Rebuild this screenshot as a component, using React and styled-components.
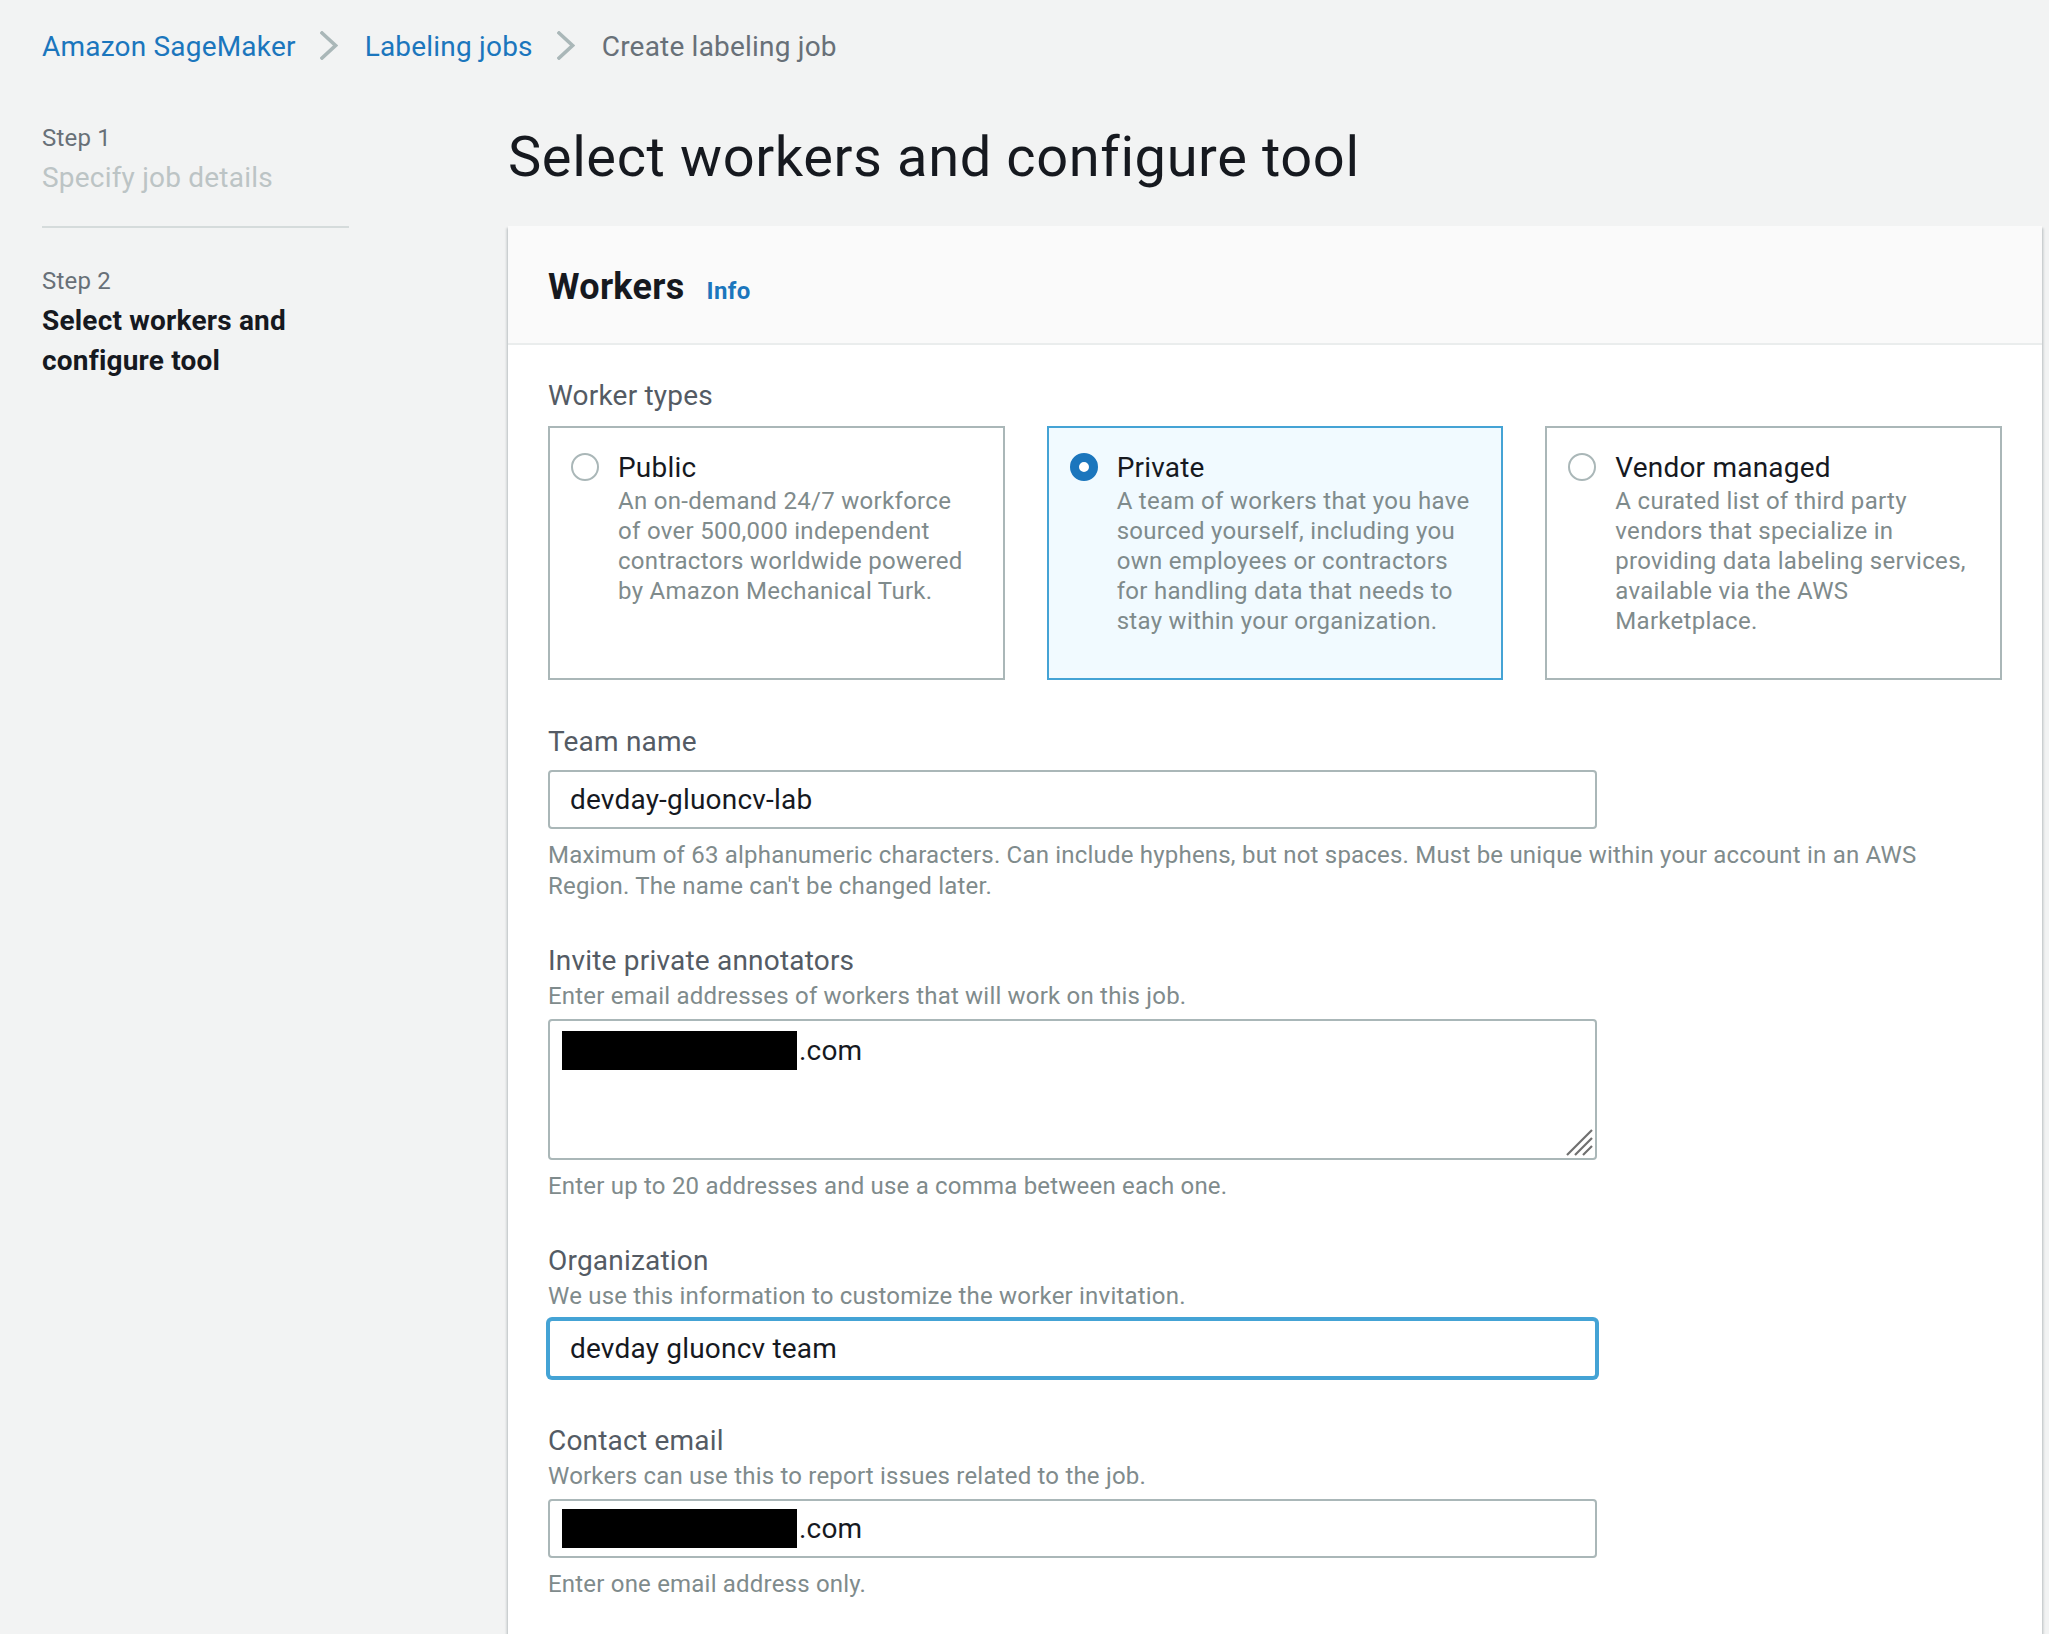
import React from 'react';
import styled, { createGlobalStyle } from 'styled-components';

const GlobalStyle = createGlobalStyle`
  html, body { margin: 0; padding: 0; background: #f2f3f3; }
  body {
    font-family: Roboto, "Noto Sans", "Liberation Sans", sans-serif;
    color: #16191f;
    -webkit-font-smoothing: antialiased;
  }
  * { box-sizing: border-box; }
`;

const Page = styled.div`
  padding: 27px 7px 0 42px;
`;

const Breadcrumbs = styled.nav`
  display: flex;
  align-items: center;
  font-size: 28px;
  line-height: 40px;
  letter-spacing: 0.2px;
`;

const Crumb = styled.a`
  color: ${(p) => (p.$current ? '#687078' : '#1b76bd')};
  text-decoration: none;
`;

const ChevronIcon = styled.svg`
  width: 18px;
  height: 29px;
  margin: -3px 27px 0 24px;
  flex: none;
`;

const Chevron = () => (
  <ChevronIcon viewBox="0 0 18 29" fill="none">
    <path d="M2 2 L15.5 14.5 L2 27" stroke="#aab7b8" strokeWidth="3.6" strokeLinecap="square" />
  </ChevronIcon>
);

const Layout = styled.div`
  display: grid;
  grid-template-columns: 307px 1fr;
  column-gap: 159px;
  margin-top: 55px;
`;

const Sidebar = styled.aside`
  display: flex;
  flex-direction: column;
`;

const StepBlock = styled.div`
  display: flex;
  flex-direction: column;
  gap: 4px;
`;

const StepNumber = styled.div`
  font-size: 24px;
  line-height: 32px;
  color: #687078;
  letter-spacing: 0.2px;
`;

const StepTitle = styled.div`
  font-size: 28px;
  line-height: 40px;
  letter-spacing: 0.2px;
  color: ${(p) => (p.$active ? '#16191f' : '#bcc4c5')};
  font-weight: ${(p) => (p.$active ? 700 : 400)};
`;

const StepDivider = styled.hr`
  border: 0;
  border-top: 2px solid #d5dbdb;
  margin: 28px 0 37px;
  width: 100%;
`;

const Main = styled.main`
  display: flex;
  flex-direction: column;
`;

const PageTitle = styled.h1`
  margin: 3px 0 37px;
  font-size: 56px;
  line-height: 64px;
  font-weight: 400;
  letter-spacing: 0.6px;
  color: #16191f;
`;

const Panel = styled.section`
  background: #fff;
  box-shadow: 0 2px 2px 0 rgba(0, 28, 36, 0.22), 2px 2px 2px 0 rgba(0, 28, 36, 0.1),
    -2px 2px 2px 0 rgba(0, 28, 36, 0.1);
`;

const PanelHeader = styled.header`
  background: #fafafa;
  border-bottom: 2px solid #eaeded;
  padding: 39px 40px 34px;
  display: flex;
  align-items: baseline;
  gap: 22px;
`;

const PanelTitle = styled.h2`
  margin: 0;
  font-size: 36px;
  line-height: 44px;
  font-weight: 700;
  letter-spacing: 0.3px;
  color: #16191f;
`;

const InfoLink = styled.a`
  font-size: 24px;
  font-weight: 700;
  color: #1b76bd;
  text-decoration: none;
  letter-spacing: 0.4px;
`;

const PanelBody = styled.div`
  padding: 31px 40px 60px;
  display: flex;
  flex-direction: column;
  gap: 39px;
`;

const Field = styled.div`
  display: flex;
  flex-direction: column;
`;

const Label = styled.div`
  font-size: 28px;
  line-height: 40px;
  color: #545b64;
  letter-spacing: 0.2px;
  margin-bottom: ${(p) => p.$gap || 0}px;
`;

const Description = styled.div`
  font-size: 24px;
  line-height: 30px;
  color: #7f8b8c;
  letter-spacing: 0.2px;
`;

const Constraint = styled(Description)`
  margin-top: 11px;
  max-width: 1400px;
  line-height: 31px;
`;

const Tiles = styled.div`
  display: grid;
  grid-template-columns: repeat(3, 1fr);
  gap: 42px;
  margin-bottom: 3px;
`;

const Tile = styled.label`
  display: flex;
  gap: 19px;
  padding: 22px 20px 42px 21px;
  border: 2px solid ${(p) => (p.$selected ? '#44a3d5' : '#aab7b8')};
  background: ${(p) => (p.$selected ? '#f1faff' : '#fff')};
  cursor: pointer;
`;

const Radio = styled.span`
  flex: none;
  width: 28px;
  height: 28px;
  margin-top: 3px;
  border-radius: 50%;
  background: #fff;
  border: ${(p) => (p.$checked ? '9px solid #1b76bd' : '2px solid #aab7b8')};
`;

const TileText = styled.div`
  display: flex;
  flex-direction: column;
`;

const TileTitle = styled.div`
  font-size: 28px;
  line-height: 36px;
  color: #16191f;
  letter-spacing: 0.2px;
`;

const TileDesc = styled.div`
  font-size: 24px;
  line-height: 30px;
  color: #7f8b8c;
  letter-spacing: 0.3px;
`;

const TileLine = styled.span`
  display: block;
  white-space: nowrap;
`;

const Control = styled.div`
  margin-top: 8px;
  margin-bottom: ${(p) => (p.$ring ? 4 : 0)}px;
  width: 1049px;
`;

const TextInput = styled.input`
  display: block;
  width: 100%;
  height: 59px;
  padding: 0 20px;
  font: inherit;
  font-size: 28px;
  letter-spacing: 0.2px;
  color: #16191f;
  background: #fff;
  border: 2px solid ${(p) => (p.$focused ? '#44a3d5' : '#aab7b8')};
  border-radius: 4px;
  outline: none;
  box-shadow: ${(p) => (p.$focused ? '0 0 0 2px #44a3d5' : 'none')};
`;

const FakeInput = styled.div`
  display: flex;
  align-items: center;
  height: 59px;
  padding: 0 20px;
  font-size: 28px;
  letter-spacing: 0.2px;
  color: #16191f;
  background: #fff;
  border: 2px solid #aab7b8;
  border-radius: 4px;
`;

const FakeTextArea = styled.div`
  position: relative;
  min-height: 141px;
  padding: 9px 20px;
  font-size: 28px;
  letter-spacing: 0.2px;
  color: #16191f;
  background: #fff;
  border: 2px solid #aab7b8;
  border-radius: 4px;
`;

const TextLine = styled.div`
  display: flex;
  align-items: center;
  height: 40px;
`;

const Redaction = styled.span`
  display: inline-block;
  flex: none;
  width: 235px;
  height: 39px;
  margin-left: -8px;
  margin-right: 2px;
  background: #000;
`;

const ResizeGrip = styled.svg`
  position: absolute;
  right: 2px;
  bottom: 2px;
  width: 30px;
  height: 30px;
`;

const Grip = () => (
  <ResizeGrip viewBox="0 0 30 30" fill="none">
    <path d="M4 29 L29 4 M12 29 L29 12 M20 29 L29 20" stroke="#707070" strokeWidth="2.2" />
  </ResizeGrip>
);

const tiles = [
  {
    title: 'Public',
    lines: [
      'An on-demand 24/7 workforce',
      'of over 500,000 independent',
      'contractors worldwide powered',
      'by Amazon Mechanical Turk.',
    ],
  },
  {
    title: 'Private',
    lines: [
      'A team of workers that you have',
      'sourced yourself, including you',
      'own employees or contractors',
      'for handling data that needs to',
      'stay within your organization.',
    ],
    selected: true,
  },
  {
    title: 'Vendor managed',
    lines: [
      'A curated list of third party',
      'vendors that specialize in',
      'providing data labeling services,',
      'available via the AWS',
      'Marketplace.',
    ],
  },
];

export default function App() {
  return (
    <>
      <GlobalStyle />
      <Page>
        <Breadcrumbs>
          <Crumb href="#">Amazon SageMaker</Crumb>
          <Chevron />
          <Crumb href="#">Labeling jobs</Crumb>
          <Chevron />
          <Crumb $current>Create labeling job</Crumb>
        </Breadcrumbs>
        <Layout>
          <Sidebar>
            <StepBlock>
              <StepNumber>Step 1</StepNumber>
              <StepTitle>Specify job details</StepTitle>
            </StepBlock>
            <StepDivider />
            <StepBlock>
              <StepNumber>Step 2</StepNumber>
              <StepTitle $active>Select workers and configure tool</StepTitle>
            </StepBlock>
          </Sidebar>
          <Main>
            <PageTitle>Select workers and configure tool</PageTitle>
            <Panel>
              <PanelHeader>
                <PanelTitle>Workers</PanelTitle>
                <InfoLink href="#">Info</InfoLink>
              </PanelHeader>
              <PanelBody>
                <Field>
                  <Label $gap={10}>Worker types</Label>
                  <Tiles>
                    {tiles.map((t) => (
                      <Tile key={t.title} $selected={t.selected}>
                        <Radio $checked={t.selected} />
                        <TileText>
                          <TileTitle>{t.title}</TileTitle>
                          <TileDesc>
                            {t.lines.map((l) => (
                              <TileLine key={l}>{l}</TileLine>
                            ))}
                          </TileDesc>
                        </TileText>
                      </Tile>
                    ))}
                  </Tiles>
                </Field>
                <Field>
                  <Label>Team name</Label>
                  <Control>
                    <TextInput readOnly defaultValue="devday-gluoncv-lab" />
                  </Control>
                  <Constraint>
                    Maximum of 63 alphanumeric characters. Can include hyphens, but not spaces. Must be unique within your account in an AWS Region. The name can't be changed later.
                  </Constraint>
                </Field>
                <Field>
                  <Label>Invite private annotators</Label>
                  <Description>Enter email addresses of workers that will work on this job.</Description>
                  <Control>
                    <FakeTextArea>
                      <TextLine>
                        <Redaction />
                        <span>.com</span>
                      </TextLine>
                      <Grip />
                    </FakeTextArea>
                  </Control>
                  <Constraint>Enter up to 20 addresses and use a comma between each one.</Constraint>
                </Field>
                <Field>
                  <Label>Organization</Label>
                  <Description>We use this information to customize the worker invitation.</Description>
                  <Control $ring>
                    <TextInput $focused readOnly defaultValue="devday gluoncv team" />
                  </Control>
                </Field>
                <Field>
                  <Label>Contact email</Label>
                  <Description>Workers can use this to report issues related to the job.</Description>
                  <Control>
                    <FakeInput>
                      <Redaction />
                      <span>.com</span>
                    </FakeInput>
                  </Control>
                  <Constraint>Enter one email address only.</Constraint>
                </Field>
              </PanelBody>
            </Panel>
          </Main>
        </Layout>
      </Page>
    </>
  );
}
